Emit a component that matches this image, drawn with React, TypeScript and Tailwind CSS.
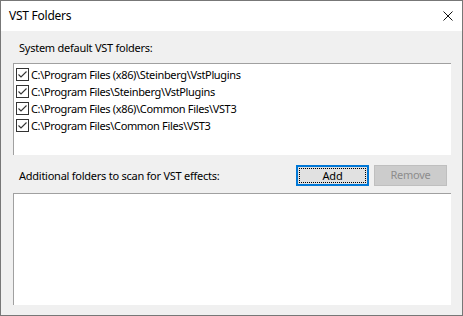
const systemFolders = [
  "C:\\Program Files (x86)\\Steinberg\\VstPlugins",
  "C:\\Program Files\\Steinberg\\VstPlugins",
  "C:\\Program Files (x86)\\Common Files\\VST3",
  "C:\\Program Files\\Common Files\\VST3",
];

function CheckBox() {
  return (
    <svg width="13" height="13" viewBox="0 0 13 13" className="shrink-0">
      <rect x="0.5" y="0.5" width="12" height="12" fill="#fff" stroke="#333" />
      <path d="M2.5 6.5 L5 9 L10.5 3.5" fill="none" stroke="#333" strokeWidth="1.1" />
    </svg>
  );
}

export default function App() {
  return (
    <div className="w-[463px] h-[316px] border border-[#777777] bg-[#f0f0f0] flex flex-col text-[11px] tracking-[-0.25px] text-black font-['Noto_Sans',sans-serif] overflow-hidden">
      <div className="h-[30px] bg-white flex items-center justify-between pl-[8px] pr-[8px]">
        <span className="leading-[16px] text-[12px]">VST Folders</span>
        <svg width="10" height="10" viewBox="0 0 10 10" className="mr-[1px]">
          <path d="M0.5 0.5 L9.5 9.5 M9.5 0.5 L0.5 9.5" stroke="#111" strokeWidth="1" />
        </svg>
      </div>

      <div className="flex flex-col pl-[12px] pr-[11px] pt-[9px] pb-[10px]">
        <div className="h-[16px] leading-[16px] ml-[6px]">System default VST folders:</div>

        <div className="mt-[7px] h-[92px] bg-white border-t border-l border-[#a0a0a0] pt-[2px] pl-[2px]">
          {systemFolders.map((f) => (
            <div key={f} className="h-[17px] flex items-center gap-[2px]">
              <CheckBox />
              <span className="leading-[17px] whitespace-nowrap tracking-[-0.35px]">{f}</span>
            </div>
          ))}
        </div>

        <div className="mt-[10px] h-[21px] flex items-center justify-between">
          <span className="ml-[6px] leading-[16px]">Additional folders to scan for VST effects:</span>
          <div className="flex gap-[5px] mr-[4px]">
            <button className="w-[73px] h-[21px] border-2 border-[#0078d7] bg-[#e1e1e1] p-[1px]">
              <div className="w-full h-full border border-dotted border-black flex items-center justify-center leading-[15px]">
                Add
              </div>
            </button>
            <button className="w-[73px] h-[21px] border border-[#bfbfbf] bg-[#cccccc] text-[#8c8c8c] flex items-center justify-center">
              Remove
            </button>
          </div>
        </div>

        <div className="mt-[7px] h-[112px] bg-white border-t border-l border-[#a0a0a0]" />
      </div>
    </div>
  );
}
